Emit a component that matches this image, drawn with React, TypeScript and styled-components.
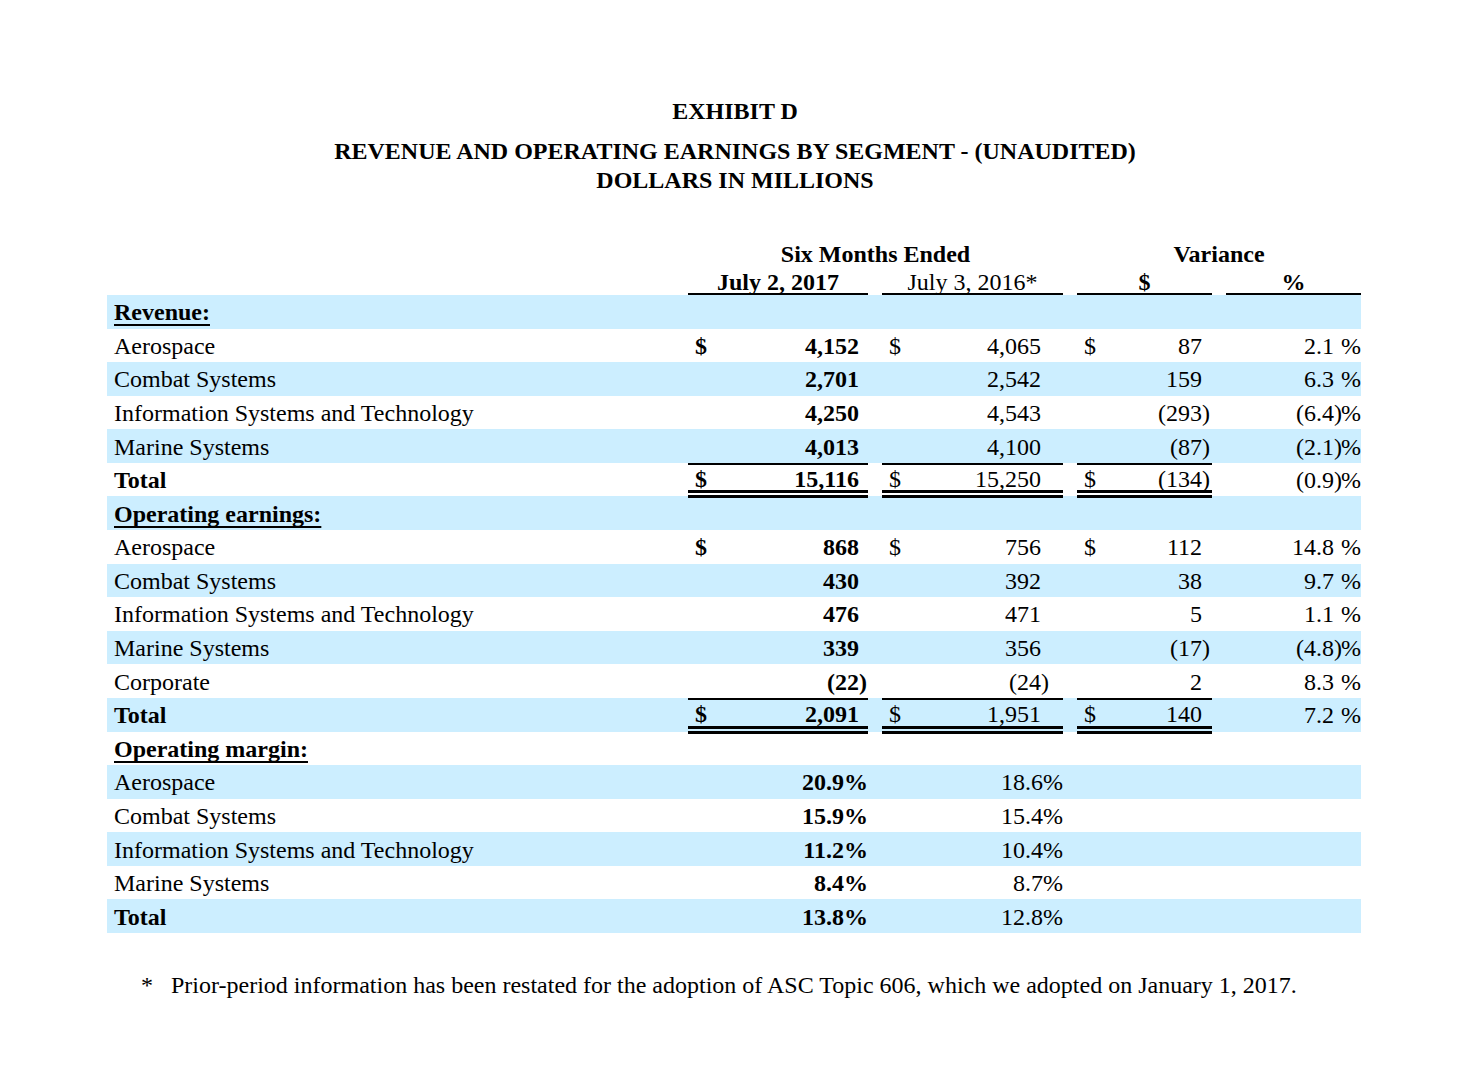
import React from "react";
import styled, { createGlobalStyle } from "styled-components";

const GlobalStyle = createGlobalStyle`
  html, body {
    margin: 0;
    padding: 0;
    background: #ffffff;
  }
  body {
    font-family: "Liberation Serif", "Times New Roman", serif;
    color: #000000;
  }
`;

const Page = styled.div`
  width: 1470px;
  height: 1080px;
  box-sizing: border-box;
  padding-top: 97px;
  font-size: 24px;
`;

const Titles = styled.div`
  display: flex;
  flex-direction: column;
  align-items: center;
  font-weight: bold;
  line-height: 29px;
`;

const TitleLine = styled.div<{ $gap?: number }>`
  margin-top: ${(p) => p.$gap ?? 0}px;
`;

const Table = styled.div`
  width: 1254px;
  margin: 44px 0 0 107px;
  display: block;
`;

const Grid = styled.div`
  display: grid;
  grid-template-columns: 567px 180px 181px 135px 135px;
  column-gap: 14px;
`;

const HeadRow = styled(Grid)`
  height: 28px;
  grid-template-rows: 100%;
  line-height: 28px;
  font-weight: bold;
`;

const SpanHead = styled.div<{ $from: number; $to: number }>`
  grid-column: ${(p) => p.$from} / ${(p) => p.$to};
  text-align: center;
  padding-top: 1px;
`;

const SubHead = styled.div<{ $bold?: boolean }>`
  text-align: center;
  font-weight: ${(p) => (p.$bold ? "bold" : "normal")};
  border-bottom: 2px solid #000;
  box-sizing: border-box;
  height: 28px;
  line-height: 26px;
  padding-top: 2px;
`;

const Row = styled(Grid)<{ $shaded: boolean }>`
  height: 33.58px;
  grid-template-rows: 100%;
  background: ${(p) => (p.$shaded ? "#cceeff" : "#ffffff")};
`;

const Label = styled.div<{ $bold?: boolean }>`
  display: flex;
  align-items: center;
  padding: 1px 0 0 7px;
  line-height: 24px;
  font-weight: ${(p) => (p.$bold ? "bold" : "normal")};
  white-space: nowrap;
`;

const SectionTitle = styled.span`
  font-weight: bold;
  text-decoration: underline;
  text-decoration-thickness: 1.5px;
  text-underline-offset: 4px;
  text-decoration-skip-ink: none;
`;

const DataCell = styled.div<{ $total?: boolean; $bold?: boolean }>`
  display: flex;
  align-items: center;
  box-sizing: border-box;
  line-height: 24px;
  min-height: 0;
  font-weight: ${(p) => (p.$bold ? "bold" : "normal")};
  white-space: nowrap;
  padding-top: 1px;
  ${(p) =>
    p.$total
      ? `border-top: 2px solid #000; border-bottom: 8px double #000; padding-top: 2px; margin-bottom: -2px;`
      : ""}
`;

const Dollar = styled.span`
  padding-left: 7px;
`;

const Num = styled.span`
  flex: 1;
  text-align: right;
`;

const Trail = styled.span<{ $w: number }>`
  width: ${(p) => p.$w}px;
  flex: none;
  text-align: left;
`;

const Footnote = styled.div`
  margin: 38px 0 0 141px;
  display: flex;
  line-height: 29px;
`;

const Star = styled.span`
  width: 30px;
`;

type Money = { v: string; d?: boolean };

type DataRow = {
  label: string;
  bold?: boolean;
  total?: boolean;
  cols?: [Money, Money, Money, string];
  margin?: [string, string];
};

type Section = { title: string; rows: DataRow[] };

const sections: Section[] = [
  {
    title: "Revenue:",
    rows: [
      { label: "Aerospace", cols: [{ v: "4,152", d: true }, { v: "4,065", d: true }, { v: "87", d: true }, "2.1"] },
      { label: "Combat Systems", cols: [{ v: "2,701" }, { v: "2,542" }, { v: "159" }, "6.3"] },
      { label: "Information Systems and Technology", cols: [{ v: "4,250" }, { v: "4,543" }, { v: "(293)" }, "(6.4)"] },
      { label: "Marine Systems", cols: [{ v: "4,013" }, { v: "4,100" }, { v: "(87)" }, "(2.1)"] },
      { label: "Total", bold: true, total: true, cols: [{ v: "15,116", d: true }, { v: "15,250", d: true }, { v: "(134)", d: true }, "(0.9)"] },
    ],
  },
  {
    title: "Operating earnings:",
    rows: [
      { label: "Aerospace", cols: [{ v: "868", d: true }, { v: "756", d: true }, { v: "112", d: true }, "14.8"] },
      { label: "Combat Systems", cols: [{ v: "430" }, { v: "392" }, { v: "38" }, "9.7"] },
      { label: "Information Systems and Technology", cols: [{ v: "476" }, { v: "471" }, { v: "5" }, "1.1"] },
      { label: "Marine Systems", cols: [{ v: "339" }, { v: "356" }, { v: "(17)" }, "(4.8)"] },
      { label: "Corporate", cols: [{ v: "(22)" }, { v: "(24)" }, { v: "2" }, "8.3"] },
      { label: "Total", bold: true, total: true, cols: [{ v: "2,091", d: true }, { v: "1,951", d: true }, { v: "140", d: true }, "7.2"] },
    ],
  },
  {
    title: "Operating margin:",
    rows: [
      { label: "Aerospace", margin: ["20.9%", "18.6%"] },
      { label: "Combat Systems", margin: ["15.9%", "15.4%"] },
      { label: "Information Systems and Technology", margin: ["11.2%", "10.4%"] },
      { label: "Marine Systems", margin: ["8.4%", "8.7%"] },
      { label: "Total", bold: true, margin: ["13.8%", "12.8%"] },
    ],
  },
];

const trailWidths = [9, 22, 10];

function split(v: string): [string, string] {
  if (v.endsWith(")")) return [v.slice(0, -1), ")"];
  return [v, ""];
}

function MoneyCell({ m, idx, total }: { m: Money; idx: number; total?: boolean }) {
  const [num, tr] = split(m.v);
  return (
    <DataCell $total={total} $bold={idx === 0}>
      {m.d ? <Dollar>$</Dollar> : null}
      <Num>{num}</Num>
      <Trail $w={trailWidths[idx]}>{tr}</Trail>
    </DataCell>
  );
}

function PctCell({ v }: { v: string }) {
  const [num, tr] = split(v);
  return (
    <DataCell>
      <Num>{num}</Num>
      <Trail $w={7}>{tr}</Trail>
      <span>%</span>
    </DataCell>
  );
}

export default function App() {
  let rowIndex = 0;
  const out: React.ReactNode[] = [];
  sections.forEach((s) => {
    const shaded = rowIndex % 2 === 0;
    rowIndex++;
    out.push(
      <Row key={s.title} $shaded={shaded}>
        <Label>
          <SectionTitle>{s.title}</SectionTitle>
        </Label>
      </Row>
    );
    s.rows.forEach((r, i) => {
      const sh = rowIndex % 2 === 0;
      rowIndex++;
      out.push(
        <Row key={s.title + i} $shaded={sh}>
          <Label $bold={r.bold}>{r.label}</Label>
          {r.cols ? (
            <>
              <MoneyCell m={r.cols[0]} idx={0} total={r.total} />
              <MoneyCell m={r.cols[1]} idx={1} total={r.total} />
              <MoneyCell m={r.cols[2]} idx={2} total={r.total} />
              <PctCell v={r.cols[3]} />
            </>
          ) : null}
          {r.margin ? (
            <>
              <DataCell $bold>
                <Num>{r.margin[0]}</Num>
              </DataCell>
              <DataCell>
                <Num>{r.margin[1]}</Num>
              </DataCell>
            </>
          ) : null}
        </Row>
      );
    });
  });

  return (
    <>
      <GlobalStyle />
      <Page>
        <Titles>
          <TitleLine>EXHIBIT D</TitleLine>
          <TitleLine $gap={11}>REVENUE AND OPERATING EARNINGS BY SEGMENT - (UNAUDITED)</TitleLine>
          <TitleLine>DOLLARS IN MILLIONS</TitleLine>
        </Titles>
        <Table>
          <HeadRow>
            <SpanHead $from={2} $to={4}>Six Months Ended</SpanHead>
            <SpanHead $from={4} $to={6}>Variance</SpanHead>
          </HeadRow>
          <HeadRow>
            <div />
            <SubHead $bold>July 2, 2017</SubHead>
            <SubHead>July 3, 2016*</SubHead>
            <SubHead $bold>$</SubHead>
            <SubHead $bold>%</SubHead>
          </HeadRow>
          {out}
        </Table>
        <Footnote>
          <Star>*</Star>
          <span>
            Prior-period information has been restated for the adoption of ASC Topic 606, which we adopted on
            January 1, 2017.
          </span>
        </Footnote>
      </Page>
    </>
  );
}
